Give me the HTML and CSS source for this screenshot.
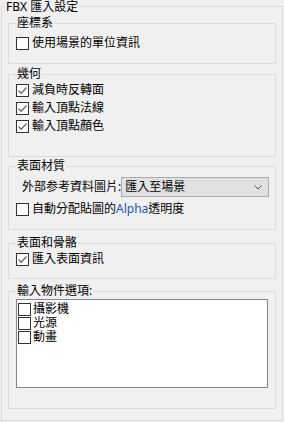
FILE: index.html
```html
<!DOCTYPE html>
<html lang="zh-Hant">
<head>
    <meta charset="UTF-8">
    <meta name="viewport" content="width=device-width, initial-scale=1.0">
    <title>FBX 匯入設定</title>
    <link rel="stylesheet" href="styles.css">
</head>
<body>
    <fieldset class="panel">
        <legend>FBX 匯入設定</legend>

        <fieldset class="group group-axis">
            <legend>座標系</legend>
            <label class="check"><span class="box"></span>使用場景的單位資訊</label>
        </fieldset>

        <fieldset class="group group-geo">
            <legend>幾何</legend>
            <label class="check"><span class="box checked"><svg viewBox="0 0 11 11"><path d="M1.5 5.5 L4.2 8.2 L9.5 2.5"/></svg></span>減負時反轉面</label>
            <label class="check"><span class="box checked"><svg viewBox="0 0 11 11"><path d="M1.5 5.5 L4.2 8.2 L9.5 2.5"/></svg></span>輸入頂點法線</label>
            <label class="check"><span class="box checked"><svg viewBox="0 0 11 11"><path d="M1.5 5.5 L4.2 8.2 L9.5 2.5"/></svg></span>輸入頂點顏色</label>
        </fieldset>

        <fieldset class="group group-mat">
            <legend>表面材質</legend>
            <div class="source">
                <span class="source-label">外部参考資料圖片:</span>
                <div class="select">
                    <span>匯入至場景</span>
                    <svg class="chevron" viewBox="0 0 8 5"><path d="M0.5 0.5 L4 4 L7.5 0.5"/></svg>
                </div>
            </div>
            <label class="check check-alpha"><span class="box"></span><span>自動分配貼圖的<span class="latin">Alpha</span>透明度</span></label>
        </fieldset>

        <fieldset class="group group-surf">
            <legend>表面和骨骼</legend>
            <label class="check"><span class="box checked"><svg viewBox="0 0 11 11"><path d="M1.5 5.5 L4.2 8.2 L9.5 2.5"/></svg></span>匯入表面資訊</label>
        </fieldset>

        <fieldset class="group group-obj">
            <legend>輸入物件選項:</legend>
            <div class="list">
                <label class="item"><span class="box"></span>攝影機</label>
                <label class="item"><span class="box"></span>光源</label>
                <label class="item"><span class="box"></span>動畫</label>
            </div>
        </fieldset>
    </fieldset>
</body>
</html>
```

FILE: styles.css
```css
body { margin: 0; background-color: #f0f0f0; color: #000; font: 12px/18px "Noto Sans", "Noto Sans CJK TC", sans-serif; text-autospace: no-autospace; }

fieldset { border: 1px solid #dcdcdc; margin: 0; min-width: 0; }
legend { padding: 0 1px; line-height: 12px; }

.panel { width: 282px; box-sizing: border-box; margin-left: 1px; padding: 4px 6px 11px; }
.panel > legend { margin-left: -3px; line-height: 13px; }

.group { padding: 0 7px; }
.group-axis { padding-top: 5px; padding-bottom: 11px; }
.group-geo { margin-top: 4px; padding-top: 1px; padding-bottom: 21px; }
.group-mat { margin-top: 3px; padding-top: 5px; padding-bottom: 11px; }
.group-surf { margin-top: 7px; padding-top: 1px; padding-bottom: 10px; }
.group-obj { margin-top: 6px; padding-top: 2px; padding-bottom: 20px; }

.check { display: flex; align-items: center; height: 18px; gap: 3px; white-space: nowrap; }
.check-alpha { margin-top: 3px; }
.box { width: 13px; height: 13px; box-sizing: border-box; border: 1px solid #333; background-color: #fff; flex: none; display: flex; }
.box svg { width: 11px; height: 11px; }
.box path { fill: none; stroke: #6a6a6a; stroke-width: 1.3; }
.latin { color: #2158b0; }

.source { display: flex; align-items: center; height: 20px; white-space: nowrap; }
.source-label { padding-left: 6px; flex: none; }
.select { margin-left: auto; width: 148px; height: 20px; box-sizing: border-box; border: 1px solid #adadad; background-color: #e1e1e1; display: flex; align-items: center; padding: 0 6px 0 3px; flex: none; }
.select span { flex: 1; }
.chevron { width: 8px; height: 5px; }
.chevron path { fill: none; stroke: #555; stroke-width: 1; }

.list { height: 89px; box-sizing: border-box; border: 1px solid #828790; background-color: #fff; padding: 2px 1px; }
.item { display: flex; align-items: center; height: 14px; gap: 2px; line-height: 14px; }
```
